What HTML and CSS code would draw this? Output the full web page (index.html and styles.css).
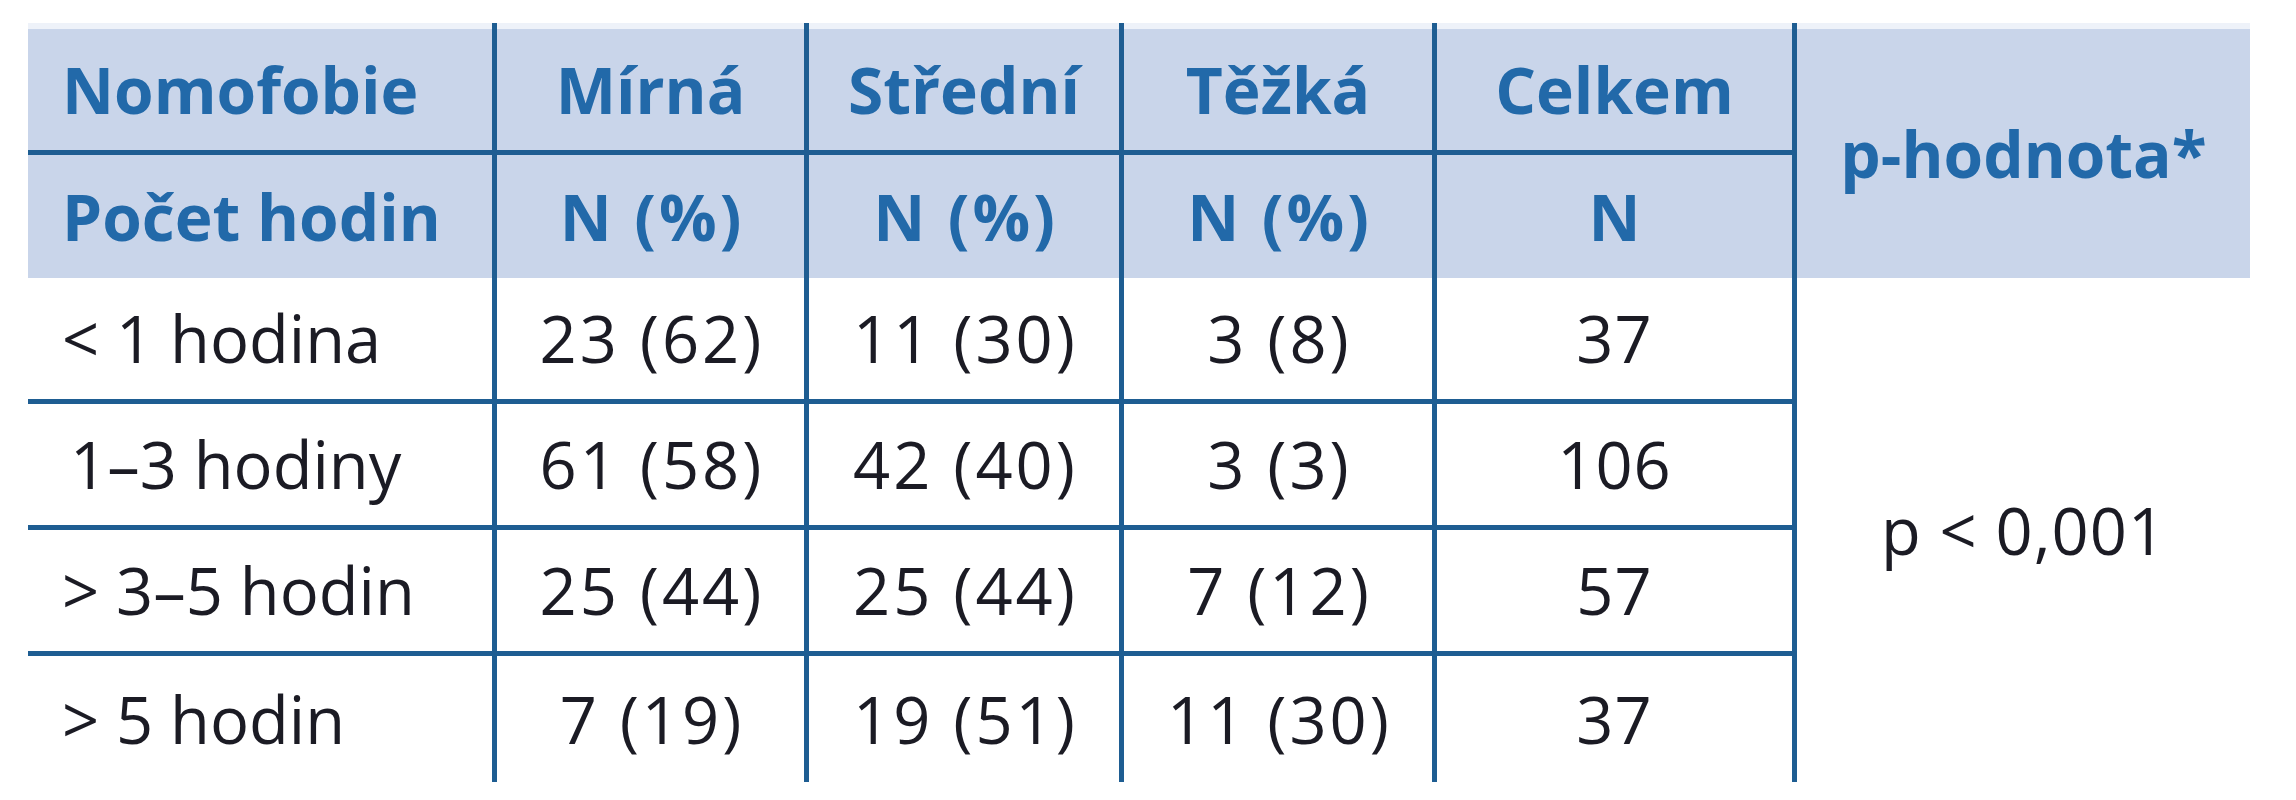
FILE: index.html
```html
<!DOCTYPE html>
<html lang="cs">
<head>
<meta charset="utf-8">
<title>Nomofobie a počet hodin</title>
<link rel="stylesheet" href="styles.css">
</head>
<body>
<table class="nomo">
  <colgroup>
    <col class="w-label">
    <col class="w-mirna">
    <col class="w-stredni">
    <col class="w-tezka">
    <col class="w-celkem">
    <col class="w-p">
  </colgroup>
  <thead>
    <tr class="head-top">
      <th class="lbl">Nomofobie</th>
      <th>Mírná</th>
      <th>Střední</th>
      <th>Těžká</th>
      <th>Celkem</th>
      <th class="pval" rowspan="2">p-hodnota*</th>
    </tr>
    <tr class="head-sub">
      <th class="lbl">Počet hodin</th>
      <th class="num">N (%)</th>
      <th class="num">N (%)</th>
      <th class="num">N (%)</th>
      <th>N</th>
    </tr>
  </thead>
  <tbody>
    <tr>
      <td class="lbl">&lt; 1 hodina</td>
      <td class="num">23 (62)</td>
      <td class="num">11 (30)</td>
      <td class="num">3 (8)</td>
      <td class="total">37</td>
      <td class="pval" rowspan="4">p &lt; 0,001</td>
    </tr>
    <tr>
      <td class="lbl lbl-range">1–3 hodiny</td>
      <td class="num">61 (58)</td>
      <td class="num">42 (40)</td>
      <td class="num">3 (3)</td>
      <td class="total">106</td>
    </tr>
    <tr>
      <td class="lbl">&gt; 3–5 hodin</td>
      <td class="num">25 (44)</td>
      <td class="num">25 (44)</td>
      <td class="num">7 (12)</td>
      <td class="total">57</td>
    </tr>
    <tr class="last">
      <td class="lbl">&gt; 5 hodin</td>
      <td class="num">7 (19)</td>
      <td class="num">19 (51)</td>
      <td class="num">11 (30)</td>
      <td class="total">37</td>
    </tr>
  </tbody>
</table>
</body>
</html>
```

FILE: styles.css
```css
html, body {
  margin: 0;
  padding: 0;
  background: #ffffff;
}

body {
  padding: 23px 0 0 28px;
  font-family: "Open Sans", "Noto Sans", sans-serif;
}

.nomo {
  table-layout: fixed;
  border-collapse: separate;
  border-spacing: 0;
  width: 2222px;
}

.w-label   { width: 469px; }
.w-mirna   { width: 312px; }
.w-stredni { width: 315px; }
.w-tezka   { width: 313px; }
.w-celkem  { width: 360px; }
.w-p       { width: 453px; }

.nomo th,
.nomo td {
  box-sizing: border-box;
  padding: 0;
  text-align: center;
  vertical-align: middle;
  line-height: 1;
  white-space: nowrap;
  border-right: 5px solid #1e5d92;
}

.nomo th {
  font-size: 64px;
  font-weight: 700;
  color: #2269a9;
  background: #c9d5ea;
}

.nomo td {
  font-size: 65px;
  font-weight: 400;
  color: #1b1b24;
  background: #ffffff;
}

.nomo .num {
  letter-spacing: 3px;
  text-indent: 3px;
}

.nomo .total {
  letter-spacing: 1px;
}

.nomo .pval {
  border-right: none;
}

.nomo td.pval {
  letter-spacing: 1px;
}

.nomo .lbl {
  text-align: left;
  padding-left: 34px;
}

.nomo .lbl-range {
  padding-left: 42px;
}

.head-top {
  height: 132px;
}

.head-top th {
  padding-top: 6px;
  background: linear-gradient(to bottom, #eef2f9 0, #eef2f9 6px, #c9d5ea 6px);
  border-bottom: 5px solid #1e5d92;
}

.head-top th.pval {
  border-bottom: none;
}

.head-sub {
  height: 123px;
}

.nomo tbody tr {
  height: 126px;
}

.nomo tbody td {
  border-bottom: 5px solid #1e5d92;
}

.nomo tbody tr.last td,
.nomo tbody td.pval {
  border-bottom: none;
}
```
